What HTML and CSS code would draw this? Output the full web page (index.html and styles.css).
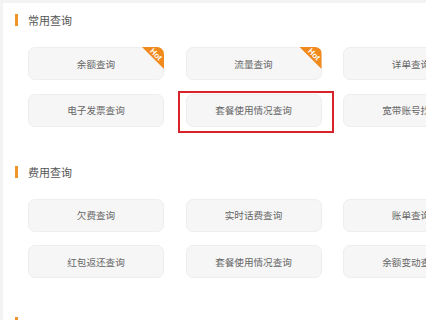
FILE: index.html
```html
<!DOCTYPE html>
<html lang="zh-CN">
<head>
<meta charset="utf-8">
<title>查询</title>
<link rel="stylesheet" href="styles.css">
</head>
<body>
<div class="panel">
  <section class="section">
    <h2 class="heading"><span class="bar"></span>常用查询</h2>
    <div class="grid">
      <div class="btn">余额查询<span class="hot"><span class="hot-text">Hot</span></span></div>
      <div class="btn">流量查询<span class="hot"><span class="hot-text">Hot</span></span></div>
      <div class="btn">详单查询</div>
      <div class="btn">电子发票查询</div>
      <div class="btn marked">套餐使用情况查询<span class="mark"></span></div>
      <div class="btn">宽带账号找回</div>
    </div>
  </section>
  <section class="section">
    <h2 class="heading"><span class="bar"></span>费用查询</h2>
    <div class="grid">
      <div class="btn">欠费查询</div>
      <div class="btn">实时话费查询</div>
      <div class="btn">账单查询</div>
      <div class="btn">红包返还查询</div>
      <div class="btn">套餐使用情况查询</div>
      <div class="btn">余额变动查询</div>
    </div>
  </section>
  <section class="section">
    <h2 class="heading"><span class="bar"></span></h2>
  </section>
</div>
</body>
</html>
```
FILE: styles.css
```css
html, body {
  margin: 0;
  padding: 0;
}
body {
  width: 426px;
  height: 320px;
  overflow: hidden;
  background: #f3f3f3;
  font-family: "Noto Sans CJK SC", "Noto Sans", sans-serif;
}
.panel {
  margin: 3px 0 0 3px;
  background: #ffffff;
  padding: 11px 0 0 12px;
  height: 400px;
  overflow: hidden;
}
.section {
  margin-bottom: 39px;
}
.heading {
  display: flex;
  align-items: center;
  height: 12px;
  margin: 0;
  font-size: 11px;
  font-weight: normal;
  color: #555;
  line-height: 12px;
}
.bar {
  width: 3px;
  height: 12px;
  background: #f0952a;
  margin-right: 10px;
  flex: none;
}
.grid {
  display: grid;
  grid-template-columns: repeat(3, 136px);
  grid-auto-rows: 33px;
  column-gap: 21.5px;
  row-gap: 13.5px;
  margin: 21px 0 0 13px;
}
.btn {
  position: relative;
  display: flex;
  align-items: center;
  justify-content: center;
  box-sizing: border-box;
  background: #f6f6f6;
  border: 1px solid #eeeeee;
  border-radius: 7px;
  font-size: 9.6px;
  color: #666;
  white-space: nowrap;
}
.hot {
  position: absolute;
  top: -1px;
  right: -1px;
  width: 22px;
  height: 22px;
  background: #f18a1c;
  clip-path: polygon(0 0, 100% 0, 100% 100%);
  border-top-right-radius: 7px;
  overflow: hidden;
}
.hot-text {
  position: absolute;
  left: 4px;
  top: 3px;
  width: 20px;
  height: 9px;
  line-height: 9px;
  text-align: center;
  font-family: "Liberation Sans", Arial, sans-serif;
  font-size: 8px;
  font-weight: bold;
  color: #ffffff;
  transform: rotate(45deg);
}
.mark {
  position: absolute;
  left: -9px;
  top: -4px;
  width: 156px;
  height: 42px;
  border: 2px solid #d8232a;
  box-sizing: border-box;
  pointer-events: none;
}
```
